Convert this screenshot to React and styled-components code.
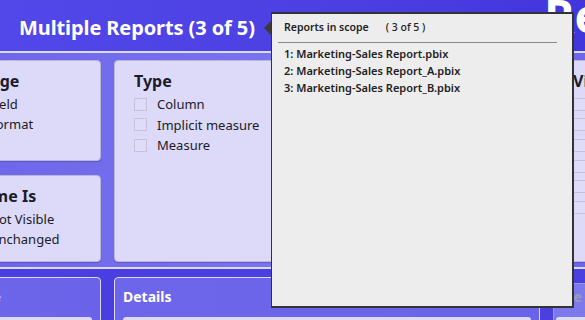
import React from 'react'
import styled, { createGlobalStyle } from 'styled-components'

const GlobalStyle = createGlobalStyle`
  html, body {
    margin: 0;
    padding: 0;
    overflow: hidden;
  }
  body {
    font-family: "Noto Sans", "Open Sans", sans-serif;
  }
`

const App = () => {
  return (
    <Page>
      <GlobalStyle />
      <Header>
        <Title>Multiple Reports (3 of 5)</Title>
        <BigTitle>Re</BigTitle>
      </Header>

      <Main>
        <Column>
          <Card height="101px">
            <CardTitle>Usage</CardTitle>
            <Option>Field</Option>
            <Option>Format</Option>
          </Card>
          <Card height="87px">
            <CardTitle>Name Is</CardTitle>
            <Option>Not Visible</Option>
            <Option>Unchanged</Option>
          </Card>
        </Column>

        <Card width="426px">
          <CardTitle>Type</CardTitle>
          <CheckRow><Box />Column</CheckRow>
          <CheckRow><Box />Implicit measure</CheckRow>
          <CheckRow><Box />Measure</CheckRow>
        </Card>

        <Card width="200px">
          <CardTitle>Visual</CardTitle>
          <CheckRow><Box />Card</CheckRow>
          <CheckRow><Box />Chart</CheckRow>
          <CheckRow><Box />Matrix</CheckRow>
          <CheckRow><Box />Slicer</CheckRow>
          <CheckRow><Box />Table</CheckRow>
          <CheckRow><Box />Text</CheckRow>
        </Card>
      </Main>

      <Bottom>
        <DarkCard width="151px">
          <DarkTitle>Name</DarkTitle>
          <Input />
        </DarkCard>
        <DarkCard width="426px">
          <DarkTitle>Details</DarkTitle>
          <Input />
        </DarkCard>
        <DarkCard width="200px" disabled>
          <DarkTitle disabled>Use filters</DarkTitle>
          <Input />
        </DarkCard>
      </Bottom>

      <Tooltip>
        <Arrow />
        <TipHead>
          <span>Reports in scope</span>
          <TipCount>( 3 of 5 )</TipCount>
        </TipHead>
        <TipRule />
        <TipItem>1: Marketing-Sales Report.pbix</TipItem>
        <TipItem>2: Marketing-Sales Report_A.pbix</TipItem>
        <TipItem>3: Marketing-Sales Report_B.pbix</TipItem>
      </Tooltip>
    </Page>
  )
}

const Page = styled.div`
  position: relative;
  width: 585px;
  height: 320px;
  overflow: hidden;
  background: linear-gradient(90deg, #6f67ea 0%, #7a74ee 50%, #6d65ea 100%);
`

const Header = styled.div`
  box-sizing: border-box;
  height: 53px;
  display: flex;
  justify-content: space-between;
  align-items: center;
  padding: 4px 0 0 19px;
  background: linear-gradient(90deg, #5247e8 0%, #4b3fe2 60%, #4335dd 100%);
  border-bottom: 2px solid #dcdaf8;
  overflow: hidden;
`

const Title = styled.h1`
  margin: 0;
  color: #fff;
  font-size: 20px;
  font-weight: 700;
  letter-spacing: -0.1px;
`

const BigTitle = styled.div`
  align-self: flex-start;
  margin-top: -12px;
  margin-right: -17px;
  color: #fff;
  font-size: 46px;
  font-weight: 700;
  line-height: 1;
`

const Main = styled.div`
  display: flex;
  gap: 13px;
  margin-left: -50px;
  padding-top: 7px;
  height: 202px;
`

const Column = styled.div`
  display: flex;
  flex-direction: column;
  gap: 14px;
  width: 151px;
`

const Card = styled.div`
  box-sizing: border-box;
  flex: none;
  width: ${p => p.width || '151px'};
  height: ${p => p.height || '202px'};
  padding: 8px 19px;
  background: #dcdaf8;
  border: 1px solid #b9b6d6;
  border-radius: 4px;
  box-shadow: 0 1px 1px rgba(40, 30, 120, 0.25);
  color: #1b1b2a;
`

const CardTitle = styled.div`
  font-size: 16px;
  font-weight: 700;
  line-height: 24px;
  margin-bottom: 1px;
`

const Option = styled.div`
  font-size: 13px;
  line-height: 20px;
  padding-left: 19px;
  white-space: nowrap;
`

const CheckRow = styled.div`
  display: flex;
  align-items: center;
  gap: 10px;
  height: 20.6px;
  font-size: 13px;
  white-space: nowrap;
`

const Box = styled.span`
  box-sizing: border-box;
  width: 13px;
  height: 13px;
  border: 1px solid #c4c2d8;
  background: #dedcf8;
`

const Bottom = styled.div`
  display: flex;
  gap: 13px;
  margin-left: -50px;
  margin-top: 5px;
  padding-top: 8px;
  height: 60px;
  border-top: 2px solid #dcdaf8;
  background: linear-gradient(90deg, #4a3ee2 0%, #4b3fe0 100%);
`

const DarkCard = styled.div`
  box-sizing: border-box;
  flex: none;
  width: ${p => p.width};
  margin-top: ${p => (p.disabled ? '6px' : '0')};
  padding: ${p => (p.disabled ? '3px 8px 0 2px' : '9px 8px 0')};
  border: 1px solid ${p => (p.disabled ? '#9a96e8' : '#dcdaf8')};
  border-radius: 4px;
  background: ${p => (p.disabled ? '#7d78ec' : 'linear-gradient(90deg, #6e66ea, #6a62e8)')};
`

const DarkTitle = styled.div`
  color: ${p => (p.disabled ? '#9c9ab8' : '#fff')};
  font-size: 14px;
  font-weight: 700;
  line-height: 20px;
  margin-bottom: 10px;
  white-space: nowrap;
`

const Input = styled.div`
  height: 20px;
  border-radius: 3px;
  background: #dcdaf8;
`

const Tooltip = styled.div`
  position: absolute;
  left: 271px;
  top: 12px;
  box-sizing: border-box;
  width: 303px;
  height: 296px;
  padding: 6px 13px 0 12px;
  background: #ededed;
  border: 2px solid #333;
  border-left-width: 1px;
  color: #222;
  font-family: "Noto Sans", sans-serif;
  font-size: 11px;
  font-weight: 600;
`

const Arrow = styled.span`
  position: absolute;
  left: -8px;
  top: 7px;
  width: 0;
  height: 0;
  border-top: 7px solid transparent;
  border-bottom: 7px solid transparent;
  border-right: 7px solid #3a3a3a;
`

const TipHead = styled.div`
  display: flex;
  gap: 17px;
  font-size: 10.5px;
  line-height: 14px;
  margin-bottom: 8px;
`

const TipCount = styled.span`
  font-weight: 500;
`

const TipRule = styled.div`
  height: 1px;
  margin: 0 2px 2px -6px;
  background: #8a8a8a;
`

const TipItem = styled.div`
  line-height: 17px;
`

export default App
